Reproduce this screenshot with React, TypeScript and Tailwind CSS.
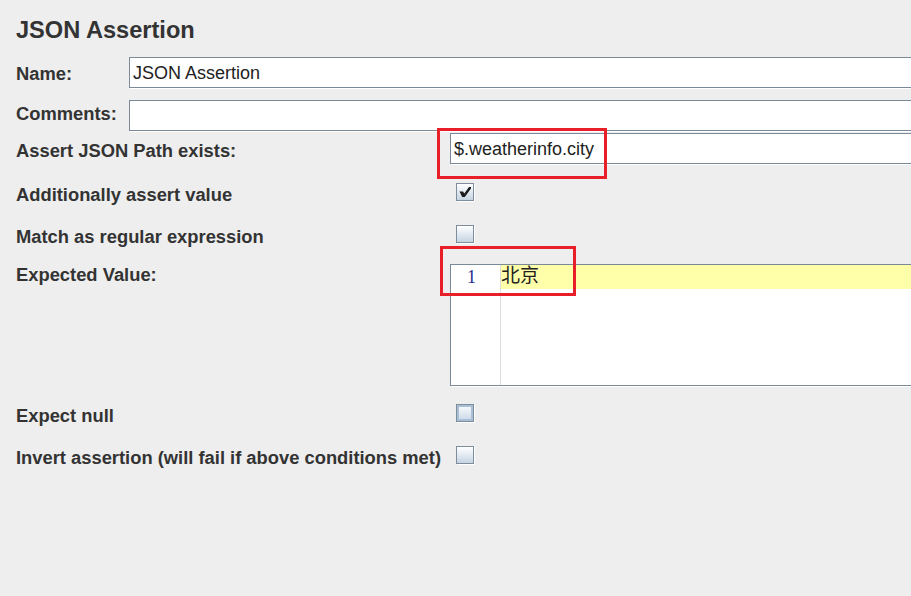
import type { ReactNode } from "react";

function Field({ value, className = "" }: { value?: string; className?: string }) {
  return (
    <div
      className={`flex h-[31px] flex-1 items-center border border-[#7a8a99] bg-white pl-[3px] pt-[2px] text-[18px] text-[#222] shadow-[1px_1px_0_#ffffff] ${className}`}
    >
      {value}
    </div>
  );
}

function Checkbox({ checked = false, rollover = false }: { checked?: boolean; rollover?: boolean }) {
  return (
    <div className="ml-[6px] size-[18px] border border-[#7d8d9c] bg-gradient-to-b from-white to-[#c5d4e3] shadow-[1px_1px_0_#ffffff]">
      {rollover ? (
        <div className="size-full border-2 border-[#a9bfd6] bg-gradient-to-b from-[#f4f8fb] to-[#cfdcea]" />
      ) : null}
      {checked ? (
        <svg viewBox="0 0 16 16" className="size-full">
          <path d="M2.5 7.5 h3.5 l1.3 2 L12 3 h2 v1.5 L7.8 13 h-2.6 z" fill="#1b1b1b" />
        </svg>
      ) : null}
    </div>
  );
}

function Row({
  label,
  labelPad,
  className = "",
  children,
}: {
  label: string;
  labelPad: string;
  className?: string;
  children: ReactNode;
}) {
  return (
    <div className={`flex items-start ${className}`}>
      <div className={`w-[434px] shrink-0 text-[18.35px] font-bold leading-[20px] ${labelPad}`}>{label}</div>
      <div className="flex flex-1 items-start">{children}</div>
    </div>
  );
}

export default function App() {
  return (
    <div className="relative h-[596px] w-[911px] overflow-hidden bg-[#eeeeee] font-['Liberation_Sans','Noto_Sans_CJK_SC',sans-serif] text-[18px] text-[#333333]">
      <div className="w-[940px] pl-[16px] pt-[16px]">
        <h1 className="text-[23.6px] font-bold leading-[28px]">JSON Assertion</h1>

        <div className="mt-[13px] flex h-[32px] items-start">
          <div className="w-[113px] shrink-0 pt-[7px] text-[18.35px] font-bold leading-[20px]">Name:</div>
          <Field value="JSON Assertion" />
        </div>

        <div className="mt-[11px] flex h-[32px] items-start">
          <div className="w-[113px] shrink-0 pt-[4px] text-[18.35px] font-bold leading-[20px]">Comments:</div>
          <Field />
        </div>

        <Row label="Assert JSON Path exists:" labelPad="pt-[8px]" className="mt-[1px] h-[32px]">
          <Field value="$.weatherinfo.city" />
        </Row>

        <Row label="Additionally assert value" labelPad="pt-[2px]" className="mt-[18px] h-[24px]">
          <Checkbox checked />
        </Row>

        <Row label="Match as regular expression" labelPad="pt-[2px]" className="mt-[18px] h-[24px]">
          <Checkbox />
        </Row>

        <Row label="Expected Value:" labelPad="pt-[1px]" className="mt-[15px] h-[123px]">
          <div className="flex h-[122px] flex-1 border border-[#7a8a99] bg-white shadow-[1px_1px_0_#ffffff]">
            <div className="w-[50px] shrink-0 border-r border-[#dddddd] pr-[24px] pt-[2px] text-right font-['Liberation_Serif',serif] text-[18px] leading-[20px] text-[#1b2a8c]">
              1
            </div>
            <div className="flex-1">
              <div className="h-[24px] bg-[#ffffaa] pt-[1px] font-['Liberation_Serif','Noto_Sans_CJK_SC',serif] text-[19px] leading-[20px] text-[#222]">
                北京
              </div>
            </div>
          </div>
        </Row>

        <Row label="Expect null" labelPad="pt-[2px]" className="mt-[17px] h-[24px]">
          <Checkbox rollover />
        </Row>

        <Row label="Invert assertion (will fail if above conditions met)" labelPad="pt-[2px]" className="mt-[18px] h-[24px]">
          <Checkbox />
        </Row>
      </div>

      <div className="pointer-events-none absolute left-[437px] top-[128px] h-[51px] w-[170px] border-[3px] border-[#e81f28]" />
      <div className="pointer-events-none absolute left-[440px] top-[246px] h-[50px] w-[136px] border-[3px] border-[#e81f28]" />
    </div>
  );
}
